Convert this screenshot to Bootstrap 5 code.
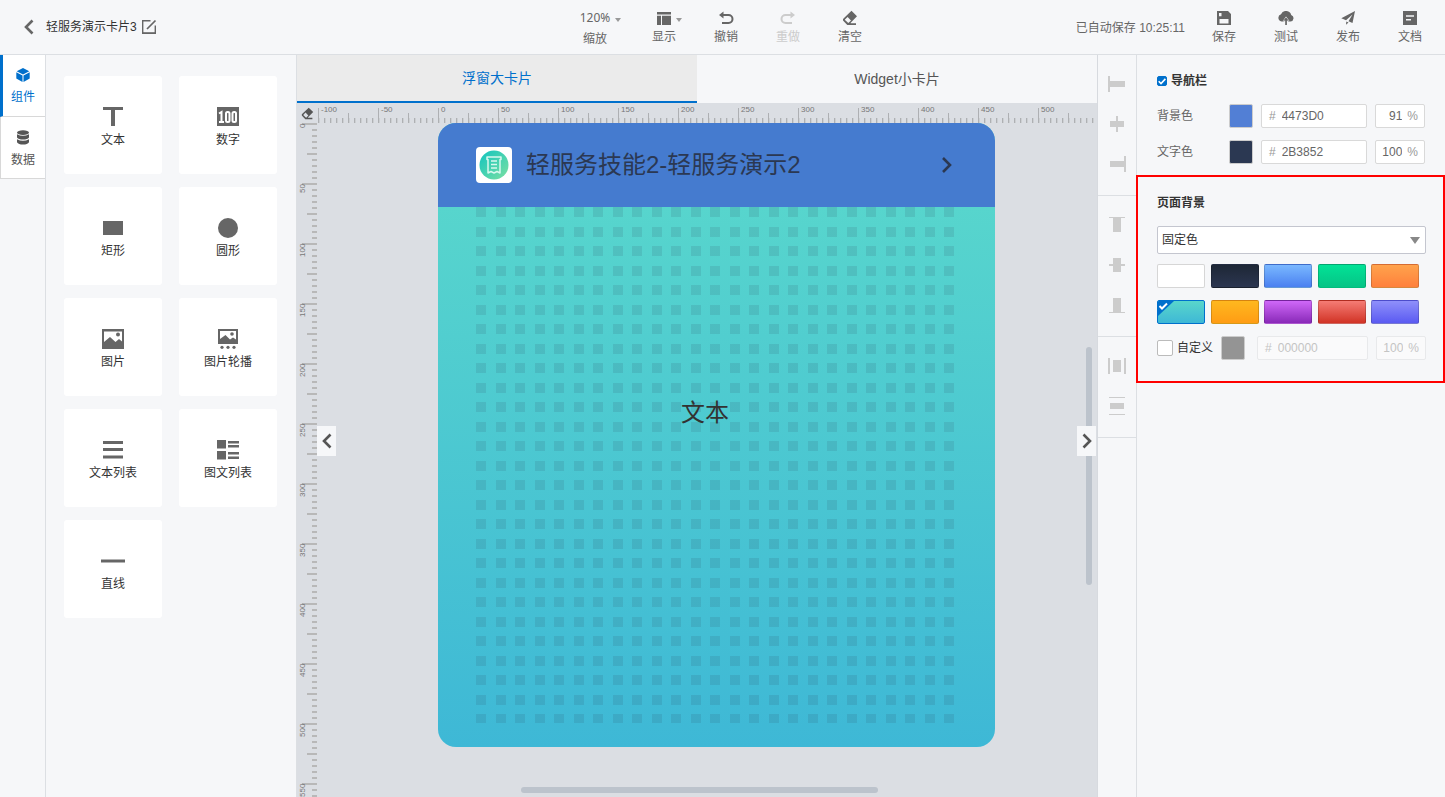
<!DOCTYPE html>
<html lang="zh-CN">
<head>
<meta charset="utf-8">
<meta name="viewport" content="width=device-width, initial-scale=1">
<title>轻服务演示卡片3</title>
<link href="https://cdn.jsdelivr.net/npm/bootstrap@5.3.0/dist/css/bootstrap.min.css" rel="stylesheet">
<style>
:root { --line: #dcdfe3; --panel: #f6f7f9; --brand: #0070cc; --ink: #666; }
body { font: 12px/18px "Liberation Sans", "Noto Sans CJK SC", sans-serif; color: #333; background: var(--panel); }
button, input, select { font: inherit; color: inherit; }
button { border: 0; background: none; padding: 0; }
svg { display: block; fill: currentColor; }

.topbar { height: 55px; border-bottom: 1px solid var(--line); color: var(--ink); }
.topbar .side { flex: 1 1 0; min-width: 0; }
.back-link { color: var(--ink); margin: 0 12px 0 24px; }
.doc-name { font-size: 12px; font-weight: 400; color: #333; line-height: 18px; }
.tools { margin-left: 4px; }
.tool { width: 62px; padding-top: 9px; color: var(--ink); align-self: stretch; display: flex; flex-direction: column; align-items: stretch; }
.tool .glyph { height: 18px; }
.tool .lbl { line-height: 20px; }
.tool.zoom-tool { font-family: "Noto Sans", "Noto Sans CJK SC", sans-serif; margin-right: 7px; }
.tool.zoom-tool .lbl { padding-top: 2px; }
.tool:disabled { color: #ccc; }
.saved { padding-top: 2px; }
.caret { position: absolute; left: 100%; top: 50%; margin-left: 5px; border: 3px solid transparent; border-top: 4px solid #999; border-bottom: 0; }

.rail { width: 46px; border-right: 1px solid var(--line); }
.rail-item { height: 62px; width: 45px; background: #fff; border-bottom: 1px solid #d8d8d8; border-left: 1px solid #d8d8d8; color: #555; gap: 6px; padding-top: 3px; }
.rail-item.current { color: var(--brand); border-left: 3px solid var(--brand); padding-right: 2px; }
.library { width: 251px; padding: 21px 19px 0 18px; border-right: 1px solid var(--line); }
.parts { display: grid; grid-template-columns: 98px 98px; justify-content: space-between; row-gap: 13px; }
.part { height: 98px; background: #fff; border-radius: 3px; padding-top: 5px; }
.part svg { color: var(--ink); margin-bottom: 4px; }

.stage { background: #dbdee3; min-width: 0; }
.stage-tab { height: 48px; font-size: 14px; background: var(--panel); color: #555; }
.stage-tab.current { background: #ebebeb; color: var(--brand); border-bottom: 2px solid var(--brand); }
.corner { width: 21px; height: 20px; flex: none; color: #555; padding-left: 4px; }
.ruler-x, .ruler-y { font-size: 8px; line-height: 10px; color: #777; overflow: hidden; }
.ruler-x { height: 20px;
  background:
    repeating-linear-gradient(90deg, #aeb0b3 0 1px, transparent 1px 60px) 0 100% / 100% 15px no-repeat,
    repeating-linear-gradient(90deg, transparent 0 30px, #aeb0b3 30px 31px, transparent 31px 60px) 0 100% / 100% 10px no-repeat,
    repeating-linear-gradient(90deg, #aeb0b3 0 1px, #cccfd2 1px 2px, transparent 2px 6px) 0 100% / 100% 5px no-repeat; }
.ruler-x span { flex: 0 0 60px; padding: 2px 0 0 3px; }
.ruler-y { width: 20px; flex: none;
  background:
    repeating-linear-gradient(#b8b8b8 0 2px, transparent 2px 60px) 100% 0 / 15px 100% no-repeat,
    repeating-linear-gradient(transparent 0 30px, #b8b8b8 30px 32px, transparent 32px 60px) 100% 0 / 10px 100% no-repeat,
    repeating-linear-gradient(#b8b8b8 0 2px, transparent 2px 6px) 100% 0 / 5px 100% no-repeat; }
.ruler-y span { flex: 0 0 60px; writing-mode: vertical-rl; transform: rotate(180deg); text-align: right; padding: 0 1px 1px 0; }
.viewport { padding-left: 121px; overflow: hidden; min-width: 0; }
.artboard { width: 557px; height: 624px; border-radius: 18px; overflow: hidden; background: linear-gradient(#57d5cd 84px, #3eb8d6); }
.artboard-head { height: 84px; background: #457bcf; color: #2b3852; font-size: 24px; line-height: 36px; padding: 0 42px 0 38px; }
.artboard-body { padding: 0 39px 24px 38px; min-height: 0; }
.app-icon { width: 36px; height: 36px; border-radius: 4px; background: #fff; margin-right: 14px; }
.art-text { top: 188px; left: 243px; font-size: 24px; line-height: 36px; color: #333; }
.handle { width: 19px; height: 30px; top: 50%; background: var(--panel); color: #555; z-index: 2; }
.handle.to-left { left: 20px; }
.handle.to-right { right: 1px; }
.thumb { background: #bcc3cc; border-radius: 3px; }
.thumb.v { width: 6px; height: 238px; right: 5px; bottom: 212px; }
.thumb.h { height: 6px; width: 357px; left: 224px; bottom: 4px; }

.aligner { width: 40px; border-left: 1px solid #d7dadf; border-right: 1px solid var(--line); color: #ccc; }
.align-set { border-bottom: 1px solid var(--line); padding: 19px 0 21px; gap: 20px; }
.align-set button { height: 20px; }

.props { width: 308px; }
.prop-set { padding: 17px 20px 11px; }
.prop-row { margin-top: 12px; }
.prop-head + .prop-row { margin-top: 14px; }
.page-bg { border: 2px solid #f00; margin-left: -1px; padding: 17px 17px 21px 19px; }
.set-title { font-size: 12px; line-height: 18px; font-weight: 700; color: #333; }
.row-name { color: var(--ink); width: 72px; }
.chip { width: 24px; height: 24px; border: 1px solid #ccc; border-radius: 2px; }
.field { height: 24px; border: 1px solid #d9d9d9; border-radius: 2px; background: #fff; color: #999; padding: 0 7px; min-width: 0; }
.field input { border: 0; outline: 0; background: none; padding: 0; width: 100%; min-width: 0; color: var(--ink); }
.field.hex { gap: 6px; flex: 1 1 0; }
.field.pct { width: 50px; gap: 5px; padding: 0 6px; }
.field.pct input { text-align: right; }
.field.off { background: #fafafb; border-color: #e8e9eb; color: #c4c4c4; }
.field.off input { color: #c4c4c4; }
.tick { appearance: none; margin: 0; border: 1px solid #bbb; border-radius: 2px; background: #fff; width: 16px; height: 16px; }
.tick.small-tick { width: 10px; height: 10px; }
.tick:checked { border-color: var(--brand); background: var(--brand); }
.tick-mark { left: 1px; top: 2px; color: #fff; pointer-events: none; }
.picker { margin-top: 14px; }
.picker select { display: block; appearance: none; width: 100%; height: 28px; border: 1px solid #c4c6cf; border-radius: 2px; background: #fff; padding: 0 4px; }
.picker::after { content: ""; position: absolute; right: 6px; top: 11px; border: 5px solid transparent; border-top: 7px solid #888; border-bottom: 0; pointer-events: none; }
.swatches { margin: 10px 7px 12px 0; }
.swatch { width: 48px; height: 24px; border-radius: 2px; border: 1px solid rgba(0, 0, 0, .16); background-origin: border-box; overflow: hidden; }
.sw-white { background: #fff; }
.sw-night { background: linear-gradient(#1e2736, #2b3650); }
.sw-sky { background: linear-gradient(#7ab8ff, #4a80f0); }
.sw-green { background: linear-gradient(#02e296, #05c486); }
.sw-orange { background: linear-gradient(#ffa34c, #ff803c); }
.sw-teal { background: linear-gradient(#59d6cb, #3eb8d6); border-color: var(--brand); }
.sw-amber { background: linear-gradient(#ffb81f, #ff9c14); }
.sw-purple { background: linear-gradient(#cf68f8, #8929b8); }
.sw-red { background: linear-gradient(#f57c75, #d13325); }
.sw-violet { background: linear-gradient(#8f90fa, #5a5af2); }
.chosen { left: 0; top: 0; }
</style>
</head>
<body class="vh-100 d-flex flex-column overflow-hidden">

<svg class="d-none" aria-hidden="true">
  <symbol id="i-eraser" viewBox="0 0 16 16"><path fill-rule="evenodd" d="M9.500.8 15 6.300 8.700 12.700V13.200H14V15H5.300L1 10.600V8.900ZM5.600 6.900 3 9.600v.4L6.300 13.100 9 10.400Z"/></symbol>
  <symbol id="i-left" viewBox="0 0 10 16"><path fill="none" stroke="currentColor" stroke-width="2.600" d="M8.500 1.500 2 8l6.500 6.500"/></symbol>
  <symbol id="i-right" viewBox="0 0 10 16"><path fill="none" stroke="currentColor" stroke-width="2.600" d="M1.500 1.500 8 8l-6.500 6.500"/></symbol>
  <symbol id="i-undo" viewBox="0 0 16 14"><path d="M1 4 5.500.5v7Z"/><path fill="none" stroke="currentColor" stroke-width="2" d="M4 4h6.500a4 4 0 0 1 0 8H4"/></symbol>
  <symbol id="i-check" viewBox="0 0 8 7"><path fill="none" stroke="currentColor" stroke-width="1.600" d="M.7 3.200 3 5.500 7.400.9"/></symbol>
</svg>

<header class="topbar d-flex align-items-center flex-shrink-0">
  <div class="side d-flex align-items-center">
    <a href="#" class="back-link" aria-label="返回"><svg width="10" height="16"><use href="#i-left"/></svg></a>
    <h1 class="doc-name mb-0">轻服务演示卡片3</h1>
    <button type="button" class="ms-1" aria-label="重命名"><svg width="16" height="16" viewBox="0 0 16 16"><path fill="none" stroke="currentColor" stroke-width="1.400" d="M9.500 1.700H1.700v12.600h12.600V6.500"/><path d="M1 13.400h14V15H1Z"/><path fill="none" stroke="currentColor" stroke-width="1.700" d="M6 10 14.500 1.500"/></svg></button>
  </div>
  <nav class="tools d-flex align-self-stretch" aria-label="编辑">
    <button type="button" class="tool zoom-tool"><span class="glyph d-flex justify-content-center align-items-center"><span class="position-relative">120%<i class="caret"></i></span></span><span class="lbl">缩放</span></button>
    <button type="button" class="tool"><span class="glyph d-flex justify-content-center align-items-center"><span class="position-relative"><svg width="14" height="13" viewBox="0 0 14 13"><path d="M0 0h14v2.500H0ZM0 3.800h4V13H0ZM5 3.800h9V13H5Z"/></svg><i class="caret"></i></span></span><span class="lbl">显示</span></button>
    <button type="button" class="tool"><span class="glyph d-flex justify-content-center align-items-center"><svg width="16" height="14"><use href="#i-undo"/></svg></span><span class="lbl">撤销</span></button>
    <button type="button" class="tool" disabled><span class="glyph d-flex justify-content-center align-items-center"><svg width="16" height="14" viewBox="0 0 16 14"><path d="M15 4 10.500.5v7Z"/><path fill="none" stroke="currentColor" stroke-width="2" d="M12 4H5.500a4 4 0 0 0 0 8H12"/></svg></span><span class="lbl">重做</span></button>
    <button type="button" class="tool"><span class="glyph d-flex justify-content-center align-items-center"><svg width="16" height="16"><use href="#i-eraser"/></svg></span><span class="lbl">清空</span></button>
  </nav>
  <div class="side d-flex align-self-stretch align-items-center justify-content-end pe-1">
    <span class="saved me-2">已自动保存 10:25:11</span>
    <button type="button" class="tool"><span class="glyph d-flex justify-content-center align-items-center"><svg width="14" height="14" viewBox="0 0 14 14"><path fill-rule="evenodd" d="M0 0h11l3 3v11H0ZM2 2v3.300h2.500V2ZM2.500 8v4.500h9V8Z"/></svg></span><span class="lbl">保存</span></button>
    <button type="button" class="tool"><span class="glyph d-flex justify-content-center align-items-center"><svg width="16" height="14" viewBox="0 0 16 14"><path d="M3.500 10.500H7L4.800 10 8 5.600 11.300 9.800 9.500 10.500h3a3.400 3.400 0 0 0 .7-6.600A5.400 5.400 0 0 0 3 3.300a3.700 3.700 0 0 0 .5 7.200Z"/><path d="M7.200 7.500h1.700V14H7.200Z"/><path d="M8 6.500 11 10 9 9.500H7L5 10Z"/></svg></span><span class="lbl">测试</span></button>
    <button type="button" class="tool"><span class="glyph d-flex justify-content-center align-items-center"><svg width="14" height="14" viewBox="0 0 14 14"><path d="M14 0 11.500 12 7.500 10.200 11.500 3.500 5 9.300.3 7.200ZM5.300 10.400 7.500 11.400 5 13.800Z"/></svg></span><span class="lbl">发布</span></button>
    <button type="button" class="tool"><span class="glyph d-flex justify-content-center align-items-center"><svg width="14" height="14" viewBox="0 0 14 14"><path fill-rule="evenodd" d="M0 0h14v14H0ZM3 4.200v1.600h8V4.200ZM3 8v1.600h5V8Z"/></svg></span><span class="lbl">文档</span></button>
  </div>
</header>

<main class="d-flex flex-fill overflow-hidden">
  <nav class="rail flex-shrink-0" aria-label="侧栏">
    <button type="button" class="rail-item current d-flex flex-column align-items-center justify-content-center"><svg width="14" height="14" viewBox="0 0 14 14"><path d="M7 0 13.300 3.300 7 6.500.7 3.300ZM.3 4.300 6.500 7.500V14L.3 10.600ZM13.700 4.300 7.500 7.500V14l6.200-3.400Z"/></svg><span>组件</span></button>
    <button type="button" class="rail-item d-flex flex-column align-items-center justify-content-center"><svg width="14" height="15" viewBox="0 0 14 15"><ellipse cx="7" cy="2.600" rx="6" ry="2.400"/><path d="M1 4.300q6 3 12 0V7.500q-1.500 2-6 2t-6-2ZM1 9.300q6 3 12 0v3q-1.500 2.300-6 2.300t-6-2.300Z"/></svg><span>数据</span></button>
  </nav>

  <aside class="library flex-shrink-0">
    <div class="parts">
      <button type="button" class="part d-flex flex-column align-items-center justify-content-center"><svg width="24" height="20" viewBox="0 0 24 20"><path d="M2 0h20v3H14v16h-4V3H2Z"/></svg><span>文本</span></button>
      <button type="button" class="part d-flex flex-column align-items-center justify-content-center"><svg width="24" height="20" viewBox="0 0 24 20"><path d="M1 0h22v19H1Z"/><g fill="none" stroke="#fff" stroke-width="2"><path d="M3 6.500 5.500 5v10M3 15h5"/><rect x="10" y="5" width="3.500" height="10" rx="1.500"/><rect x="16.500" y="5" width="3.500" height="10" rx="1.500"/></g></svg><span>数字</span></button>
      <button type="button" class="part d-flex flex-column align-items-center justify-content-center"><svg width="24" height="20" viewBox="0 0 24 20"><path d="M2 3h20v14H2Z"/></svg><span>矩形</span></button>
      <button type="button" class="part d-flex flex-column align-items-center justify-content-center"><svg width="24" height="20" viewBox="0 0 24 20"><circle cx="12" cy="10" r="10"/></svg><span>圆形</span></button>
      <button type="button" class="part d-flex flex-column align-items-center justify-content-center"><svg width="24" height="20" viewBox="0 0 24 20"><path fill-rule="evenodd" d="M1 0h22v20H1ZM3 2.500V13l6-5 5.500 5 3.500-3 3 2.500v-10Z"/><circle cx="17" cy="5.500" r="2"/></svg><span>图片</span></button>
      <button type="button" class="part d-flex flex-column align-items-center justify-content-center"><svg width="24" height="20" viewBox="0 0 24 20"><path fill-rule="evenodd" d="M2 0h20v15H2ZM4 2v8l5.500-4L14 10.500l3-2 3 2V2Z"/><circle cx="16" cy="5" r="1.800"/><circle cx="6" cy="18.300" r="1.600"/><circle cx="12" cy="18.300" r="1.600"/><circle cx="18" cy="18.300" r="1.600"/></svg><span>图片轮播</span></button>
      <button type="button" class="part d-flex flex-column align-items-center justify-content-center"><svg width="24" height="20" viewBox="0 0 24 20"><path d="M2 1h20v3H2ZM2 8h20v3H2ZM2 15.500h20v3H2Z"/></svg><span>文本列表</span></button>
      <button type="button" class="part d-flex flex-column align-items-center justify-content-center"><svg width="24" height="20" viewBox="0 0 24 20"><path d="M1 0h9v8.500H1ZM1 11h9v8.500H1ZM12 1h11v2.500H12ZM12 5h11v2.500H12ZM12 12h11v2.500H12ZM12 16.500h11V19H12Z"/></svg><span>图文列表</span></button>
      <button type="button" class="part d-flex flex-column align-items-center justify-content-center"><svg width="24" height="20" viewBox="0 0 24 20"><path d="M0 8.500h24v3H0Z"/></svg><span>直线</span></button>
    </div>
  </aside>

  <section class="stage position-relative d-flex flex-column flex-fill">
    <div class="d-flex" role="tablist">
      <button type="button" role="tab" aria-selected="true" class="stage-tab current flex-fill w-50">浮窗大卡片</button>
      <button type="button" role="tab" aria-selected="false" class="stage-tab flex-fill w-50">Widget小卡片</button>
    </div>
    <div class="d-flex">
      <button type="button" class="corner d-flex align-items-center" aria-label="清除参考线"><svg width="13" height="13"><use href="#i-eraser"/></svg></button>
      <div class="ruler-x d-flex flex-fill"><span>-100</span><span>-50</span><span>0</span><span>50</span><span>100</span><span>150</span><span>200</span><span>250</span><span>300</span><span>350</span><span>400</span><span>450</span><span>500</span></div>
    </div>
    <div class="d-flex flex-fill overflow-hidden">
      <div class="ruler-y d-flex flex-column"><span>0</span><span>50</span><span>100</span><span>150</span><span>200</span><span>250</span><span>300</span><span>350</span><span>400</span><span>450</span><span>500</span><span>550</span></div>
      <div class="viewport flex-fill">
        <div class="artboard d-flex flex-column">
          <div class="artboard-head d-flex align-items-center">
            <span class="app-icon d-flex align-items-center justify-content-center"><svg width="30" height="30" viewBox="0 0 30 30"><defs><linearGradient id="mint" x1="0" y1="0" x2="1" y2="1"><stop offset="0" stop-color="#10c4c0"/><stop offset="1" stop-color="#7de0a2"/></linearGradient></defs><circle cx="15" cy="15" r="14.500" fill="url(#mint)"/><path fill="none" stroke="#d8f8ee" stroke-width="1.500" stroke-linejoin="round" d="M8 7h14v2.500h-1V23l-3-1.500L15 23l-3-1.500L9 23V9.500H8ZM12 11h6M12 14.500h6M12 18h6"/></svg></span>
            <span class="flex-fill">轻服务技能2-轻服务演示2</span>
            <svg width="12" height="18" viewBox="0 0 12 18"><path fill="none" stroke="currentColor" stroke-width="2.600" d="M2 2l7 7-7 7"/></svg>
          </div>
          <div class="artboard-body position-relative flex-fill">
            <svg width="100%" height="100%"><defs><pattern id="dots" width="39" height="39" patternUnits="userSpaceOnUse"><path fill="#2b3852" fill-opacity=".12" d="M0 0h10v10H0ZM20 0h10v10H20ZM0 20h10v10H0ZM20 20h10v10H20Z"/></pattern></defs><rect width="100%" height="100%" fill="url(#dots)"/></svg>
            <span class="art-text position-absolute">文本</span>
          </div>
        </div>
      </div>
    </div>
    <button type="button" class="handle to-left position-absolute d-flex align-items-center justify-content-center" aria-label="收起组件"><svg width="10" height="16"><use href="#i-left"/></svg></button>
    <button type="button" class="handle to-right position-absolute d-flex align-items-center justify-content-center" aria-label="收起属性"><svg width="10" height="16"><use href="#i-right"/></svg></button>
    <span class="thumb v position-absolute"></span>
    <span class="thumb h position-absolute"></span>
  </section>

  <nav class="aligner flex-shrink-0" aria-label="对齐">
    <div class="align-set d-flex flex-column align-items-center">
      <button type="button" aria-label="左对齐"><svg width="20" height="20" viewBox="0 0 20 20"><path d="M1 2h2v16H1ZM3 7h15v6H3Z"/></svg></button>
      <button type="button" aria-label="水平居中"><svg width="20" height="20" viewBox="0 0 20 20"><path d="M9 2h2v16H9ZM3 7h14v6H3Z"/></svg></button>
      <button type="button" aria-label="右对齐"><svg width="20" height="20" viewBox="0 0 20 20"><path d="M17 2h2v16h-2ZM3 7h14v6H3Z"/></svg></button>
    </div>
    <div class="align-set d-flex flex-column align-items-center">
      <button type="button" aria-label="顶对齐"><svg width="20" height="20" viewBox="0 0 20 20"><path d="M2 2h16v1H2ZM6 3h8v14H6Z"/></svg></button>
      <button type="button" aria-label="垂直居中"><svg width="20" height="20" viewBox="0 0 20 20"><path d="M2 9h16v2H2ZM6 3h8v14H6Z"/></svg></button>
      <button type="button" aria-label="底对齐"><svg width="20" height="20" viewBox="0 0 20 20"><path d="M2 17h16v1H2ZM6 3h8v14H6Z"/></svg></button>
    </div>
    <div class="align-set d-flex flex-column align-items-center">
      <button type="button" aria-label="水平分布"><svg width="20" height="20" viewBox="0 0 20 20"><path d="M1 2h2v16H1ZM17 2h2v16h-2ZM6 4h8v12H6Z"/></svg></button>
      <button type="button" aria-label="垂直分布"><svg width="20" height="20" viewBox="0 0 20 20"><path d="M2 1h16v1H2ZM2 18h16v1H2ZM3 7h14v6H3Z"/></svg></button>
    </div>
  </nav>

  <aside class="props flex-shrink-0">
    <section class="prop-set">
      <div class="prop-head d-flex align-items-center">
        <span class="position-relative d-flex"><input type="checkbox" id="nav-on" class="tick small-tick" checked><svg class="tick-mark position-absolute" width="8" height="7"><use href="#i-check"/></svg></span>
        <label for="nav-on" class="set-title ms-1">导航栏</label>
      </div>
      <div class="prop-row d-flex align-items-center">
        <label for="bg-hex" class="row-name">背景色</label>
        <button type="button" class="chip me-2" style="background:#527fd5" aria-label="选择背景色"></button>
        <span class="field hex d-flex align-items-center me-2">#<input id="bg-hex" value="4473D0"></span>
        <span class="field pct d-flex align-items-center"><input aria-label="背景色不透明度" value="91">%</span>
      </div>
      <div class="prop-row d-flex align-items-center">
        <label for="fg-hex" class="row-name">文字色</label>
        <button type="button" class="chip me-2" style="background:#2b3852" aria-label="选择文字色"></button>
        <span class="field hex d-flex align-items-center me-2">#<input id="fg-hex" value="2B3852"></span>
        <span class="field pct d-flex align-items-center"><input aria-label="文字色不透明度" value="100">%</span>
      </div>
    </section>
    <section class="page-bg">
      <h2 class="set-title mb-0"><label for="bg-kind">页面背景</label></h2>
      <div class="picker position-relative"><select id="bg-kind"><option>固定色</option><option>渐变色</option></select></div>
      <div class="swatches d-flex justify-content-between">
        <button type="button" class="swatch sw-white" aria-label="白色"></button>
        <button type="button" class="swatch sw-night" aria-label="深蓝"></button>
        <button type="button" class="swatch sw-sky" aria-label="天蓝"></button>
        <button type="button" class="swatch sw-green" aria-label="绿色"></button>
        <button type="button" class="swatch sw-orange" aria-label="橙色"></button>
      </div>
      <div class="swatches d-flex justify-content-between">
        <button type="button" class="swatch sw-teal position-relative" aria-label="青色" aria-pressed="true"><svg class="chosen position-absolute" width="17" height="17" viewBox="0 0 17 17"><path fill="#0070cc" d="M0 0h16L0 15Z"/><path fill="none" stroke="#fff" stroke-width="2" d="M1.500 5 4 7.500 9 2.500"/></svg></button>
        <button type="button" class="swatch sw-amber" aria-label="琥珀"></button>
        <button type="button" class="swatch sw-purple" aria-label="紫色"></button>
        <button type="button" class="swatch sw-red" aria-label="红色"></button>
        <button type="button" class="swatch sw-violet" aria-label="蓝紫"></button>
      </div>
      <div class="d-flex align-items-center">
        <input type="checkbox" id="custom-on" class="tick me-1">
        <label for="custom-on" class="me-2">自定义</label>
        <button type="button" class="chip me-2" style="background:#949494" aria-label="选择自定义颜色" disabled></button>
        <span class="field hex off d-flex align-items-center ms-1 me-2">#<input aria-label="自定义颜色" value="000000" disabled></span>
        <span class="field pct off d-flex align-items-center"><input aria-label="自定义不透明度" value="100" disabled>%</span>
      </div>
    </section>
  </aside>
</main>
<script src="https://cdn.jsdelivr.net/npm/bootstrap@5.3.0/dist/js/bootstrap.bundle.min.js"></script>
</body>
</html>
